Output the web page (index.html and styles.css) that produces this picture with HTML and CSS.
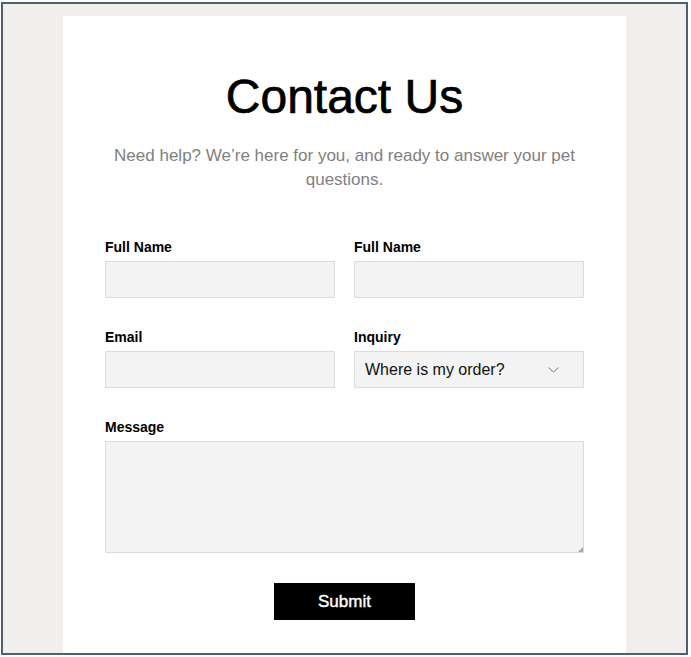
FILE: index.html
```html
<!DOCTYPE html>
<html lang="en">
<head>
<meta charset="utf-8">
<title>Contact Us</title>
<link rel="stylesheet" href="styles.css">
</head>
<body>
<div class="frame">
  <main class="card">
    <h1 class="title">Contact Us</h1>
    <p class="subtitle">Need help? We’re here for you, and ready to answer your pet questions.</p>
    <form class="form">
      <div class="row">
        <div class="field">
          <label class="label">Full Name</label>
          <input class="input" type="text">
        </div>
        <div class="field">
          <label class="label">Full Name</label>
          <input class="input" type="text">
        </div>
      </div>
      <div class="row">
        <div class="field">
          <label class="label">Email</label>
          <input class="input" type="email">
        </div>
        <div class="field">
          <label class="label">Inquiry</label>
          <div class="select-wrap">
            <select class="input select">
              <option>Where is my order?</option>
            </select>
            <svg class="chevron" width="11" height="6" viewBox="0 0 11 6"><polyline points="0.5,0.5 5.5,5 10.5,0.5" fill="none" stroke="#777" stroke-width="1"/></svg>
          </div>
        </div>
      </div>
      <div class="field">
        <label class="label">Message</label>
        <div class="textarea-wrap">
          <textarea class="input textarea"></textarea>
        </div>
      </div>
      <div class="actions">
        <button class="submit" type="button">Submit</button>
      </div>
    </form>
  </main>
</div>
</body>
</html>
```

FILE: styles.css
```css
* { box-sizing: border-box; }

html, body {
  margin: 0;
  padding: 0;
  background: #ffffff;
  font-family: "Liberation Sans", Arial, sans-serif;
}

.frame {
  margin: 2px 0 0 1px;
  width: 687px;
  height: 653px;
  border: 2px solid #4b6170;
  background: #f1efeb;
  padding: 12px 60px 0 60px;
  display: flex;
  flex-direction: column;
  overflow: hidden;
}

.card {
  flex: 1;
  background: #ffffff;
  padding: 53px 42px 0 42px;
}

.title {
  margin: 0 0 19px 0;
  font-size: 48px;
  line-height: 56px;
  font-weight: 400;
  color: #000;
  -webkit-text-stroke: 0.7px #000;
  text-align: center;
}

.subtitle {
  margin: 0 0 46px 0;
  font-size: 17px;
  line-height: 24px;
  color: #808080;
  text-align: center;
}

.form {
  display: flex;
  flex-direction: column;
  gap: 30px;
}

.row {
  display: grid;
  grid-template-columns: 1fr 1fr;
  column-gap: 19px;
}

.field {
  display: flex;
  flex-direction: column;
}

.label {
  font-size: 14px;
  line-height: 18px;
  font-weight: 700;
  color: #000;
  margin-bottom: 5px;
}

.input {
  display: block;
  width: 100%;
  height: 37px;
  margin: 0;
  border: 1px solid #dcdcdc;
  background: #f3f3f3;
  border-radius: 0;
  font-family: inherit;
  outline: none;
}

.select-wrap {
  position: relative;
}

.select {
  appearance: none;
  -webkit-appearance: none;
  padding: 0 0 0 10px;
  font-size: 16px;
  color: #111;
}

.chevron {
  position: absolute;
  right: 25px;
  top: 16px;
}

.textarea-wrap {
  position: relative;
}

.textarea {
  height: 112px;
  resize: none;
}

.textarea-wrap::after {
  content: "";
  position: absolute;
  right: 1px;
  bottom: 1px;
  width: 0;
  height: 0;
  border-left: 5px solid transparent;
  border-bottom: 5px solid #aaa;
}

.actions {
  display: flex;
  justify-content: center;
}

.submit {
  width: 141px;
  height: 37px;
  border: none;
  background: #000;
  color: #fff;
  font-family: inherit;
  font-size: 17px;
  font-weight: 400;
  -webkit-text-stroke: 0.4px #fff;
  cursor: pointer;
}
```
